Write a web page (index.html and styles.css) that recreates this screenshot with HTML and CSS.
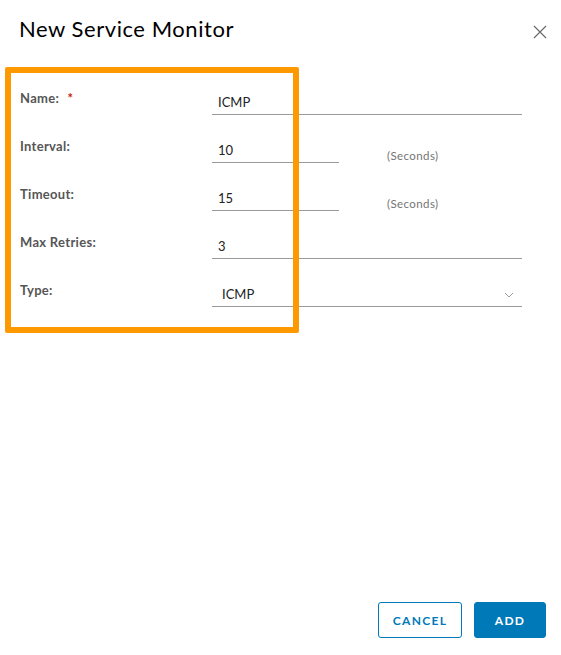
FILE: index.html
```html
<!DOCTYPE html>
<html>
<head>
<meta charset="utf-8">
<link rel="stylesheet" href="styles.css">
</head>
<body>
<div class="modal">
  <header class="modal-header">
    <h1 class="modal-title">New Service Monitor</h1>
    <button class="close" aria-label="Close">
      <svg width="14" height="14" viewBox="0 0 14 14"><path d="M1 1L13 13M13 1L1 13" stroke="#6a6a6a" stroke-width="1.2" fill="none"/></svg>
    </button>
  </header>
  <form class="form">
    <div class="row">
      <label class="label">Name: <span class="req">*</span></label>
      <div class="control wide"><input class="input" value="ICMP"></div>
    </div>
    <div class="row">
      <label class="label">Interval:</label>
      <div class="control short"><input class="input" value="10"></div>
      <span class="unit">(Seconds)</span>
    </div>
    <div class="row">
      <label class="label">Timeout:</label>
      <div class="control short"><input class="input" value="15"></div>
      <span class="unit">(Seconds)</span>
    </div>
    <div class="row">
      <label class="label">Max Retries:</label>
      <div class="control wide"><input class="input" value="3"></div>
    </div>
    <div class="row">
      <label class="label">Type:</label>
      <div class="control wide select">
        <span class="select-value">ICMP</span>
        <svg class="chev" width="10" height="6" viewBox="0 0 10 6"><path d="M1 1L5 5L9 1" stroke="#9a9a9a" stroke-width="1" fill="none"/></svg>
      </div>
    </div>
  </form>
  <footer class="footer">
    <button class="btn btn-outline" type="button">CANCEL</button>
    <button class="btn btn-primary" type="button">ADD</button>
  </footer>
  <div class="highlight"></div>
</div>
</body>
</html>
```
FILE: styles.css
```css
html, body {
  margin: 0;
  padding: 0;
  background: #fff;
}
body {
  font-family: Lato, "Open Sans", sans-serif;
  color: #333;
}
.modal {
  position: relative;
  width: 561px;
  height: 655px;
  display: flex;
  flex-direction: column;
}
.modal-header {
  display: flex;
  justify-content: space-between;
  align-items: flex-start;
  padding: 15px 14px 0 19px;
  height: 53px;
  box-sizing: border-box;
}
.modal-title {
  margin: 0;
  font-size: 22px;
  line-height: 28px;
  font-weight: 400;
  letter-spacing: 0.55px;
  color: #000;
}
.close {
  border: 0;
  background: none;
  padding: 0;
  margin-top: 10px;
  width: 14px;
  height: 14px;
  display: flex;
}
.form {
  margin: 0;
  padding-left: 20px;
  display: flex;
  flex-direction: column;
  margin-top: 14px;
}
.row {
  height: 48px;
  display: flex;
  align-items: flex-end;
}
.label {
  width: 192px;
  flex: none;
  font-size: 13px;
  line-height: 16px;
  font-weight: 700;
  letter-spacing: 0.3px;
  color: #565656;
  margin-bottom: 9px;
}
.req {
  color: #c92100;
  margin-left: 5px;
}
.control {
  height: 25px;
  box-sizing: border-box;
  border-bottom: 1px solid #9a9a9a;
  display: flex;
  align-items: center;
}
.wide { width: 310px; }
.short { width: 127px; }
.input {
  border: 0;
  outline: none;
  background: transparent;
  font-family: Lato, "Open Sans", sans-serif;
  font-size: 13px;
  line-height: 24px;
  height: 24px;
  padding: 0 0 0 6px;
  width: 100%;
  color: #222;
}
.unit {
  margin-left: 48px;
  font-size: 11.5px;
  line-height: 14px;
  letter-spacing: 0.4px;
  color: #747474;
  margin-bottom: 0;
}
.select {
  justify-content: space-between;
  padding: 0 8px 0 10px;
}
.select-value {
  font-size: 13px;
  line-height: 24px;
  color: #222;
}
.chev { margin-top: 2px; }
.footer {
  margin-top: auto;
  display: flex;
  justify-content: flex-end;
  gap: 12px;
  padding: 0 15px 17px 0;
}
.btn {
  height: 36px;
  box-sizing: border-box;
  border-radius: 3px;
  font-family: Lato, "Open Sans", sans-serif;
  font-size: 12px;
  font-weight: 700;
  letter-spacing: 1.3px;
  padding: 0 12px;
}
.btn-outline {
  width: 84px;
  background: #fff;
  color: #0079b8;
  border: 1px solid #0079b8;
}
.btn-primary {
  width: 72px;
  background: #0079b8;
  color: #fff;
  border: 1px solid #0079b8;
}
.highlight {
  position: absolute;
  left: 5px;
  top: 67px;
  width: 294px;
  height: 266px;
  box-sizing: border-box;
  border: 6px solid #ff9900;
  border-radius: 2px;
  pointer-events: none;
}
```
